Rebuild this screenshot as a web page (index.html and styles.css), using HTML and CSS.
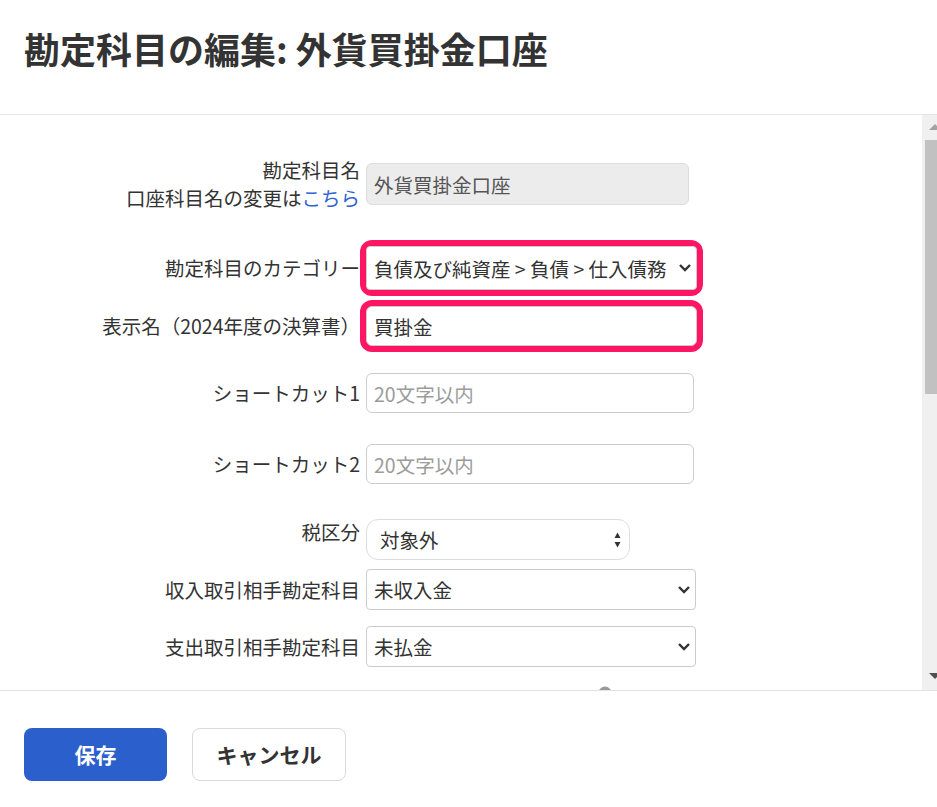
FILE: index.html
```html
<!DOCTYPE html>
<html lang="ja">
<head>
<meta charset="utf-8">
<title>勘定科目の編集</title>
<link rel="stylesheet" href="styles.css">
</head>
<body>
<div class="app">
  <header class="head">
    <h1 class="title">勘定科目の編集: 外貨買掛金口座</h1>
  </header>
  <div class="viewport">
    <main class="body">
      <form class="form">
        <div class="row r1">
          <label class="lbl"><span class="ln">勘定科目名</span><span class="ln">口座科目名の変更は<a class="link" href="#">こちら</a></span></label>
          <input class="input ro w323" value="外貨買掛金口座" disabled>
        </div>
        <div class="row r2">
          <label class="lbl">勘定科目のカテゴリー</label>
          <div class="sel w331 hl">
            <select class="select h44"><option>負債及び純資産 &gt; 負債 &gt; 仕入債務</option></select>
            <svg class="chev" width="14" height="9" viewBox="0 0 14 9"><path d="M2 2l5 5 5-5" fill="none" stroke="#333" stroke-width="2.4"/></svg>
          </div>
        </div>
        <div class="row r3">
          <label class="lbl">表示名（2024年度の決算書）</label>
          <input class="input w331 h40 hl" value="買掛金">
        </div>
        <div class="row r4">
          <label class="lbl">ショートカット1</label>
          <input class="input w328 h40" placeholder="20文字以内">
        </div>
        <div class="row r5">
          <label class="lbl">ショートカット2</label>
          <input class="input w328 h40" placeholder="20文字以内">
        </div>
        <div class="row r6 top">
          <label class="lbl">税区分</label>
          <div class="sel w264">
            <select class="select h41 round"><option>対象外</option></select>
            <svg class="updown" width="7" height="16" viewBox="0 0 7 16"><path d="M3.5 0.5L6.5 6H0.5z M3.5 15.5L6.5 10H0.5z" fill="#333"/></svg>
          </div>
        </div>
        <div class="row r7">
          <label class="lbl">収入取引相手勘定科目</label>
          <div class="sel w330">
            <select class="select h41"><option>未収入金</option></select>
            <svg class="chev" width="14" height="9" viewBox="0 0 14 9"><path d="M2 2l5 5 5-5" fill="none" stroke="#333" stroke-width="2.4"/></svg>
          </div>
        </div>
        <div class="row r8">
          <label class="lbl">支出取引相手勘定科目</label>
          <div class="sel w330">
            <select class="select h41"><option>未払金</option></select>
            <svg class="chev" width="14" height="9" viewBox="0 0 14 9"><path d="M2 2l5 5 5-5" fill="none" stroke="#333" stroke-width="2.4"/></svg>
          </div>
        </div>
        <div class="row r9">
          <span class="lbl"></span>
          <div class="help-wrap">
            <svg class="help" width="14" height="14" viewBox="0 0 14 14"><circle cx="7" cy="7" r="6.5" fill="#9a9a9a"/></svg>
          </div>
        </div>
      </form>
    </main>
    <div class="sb" aria-hidden="true">
      <div class="sb-btn">
        <svg width="15" height="25" viewBox="0 0 15 25"><polygon points="7,15 13,9 19,15" fill="#a3a3a3"/></svg>
      </div>
      <div class="sb-thumb"></div>
      <div class="sb-fill"></div>
      <div class="sb-btn">
        <svg width="15" height="25" viewBox="0 0 15 25"><polygon points="7,8 19,8 13,14" fill="#505050"/></svg>
      </div>
    </div>
  </div>
  <footer class="foot">
    <button class="btn btn-primary" type="button">保存</button>
    <button class="btn btn-default" type="button">キャンセル</button>
  </footer>
</div>
</body>
</html>
```

FILE: styles.css
```css
html, body {
  margin: 0;
  padding: 0;
  background: #fff;
}

body {
  font-family: "Noto Sans CJK JP", "Noto Sans", sans-serif;
  color: #333;
}

.app {
  display: flex;
  flex-direction: column;
  height: 807px;
}

.head {
  padding: 24px 24px 42px;
  border-bottom: 1px solid #e5e5e5;
  flex: none;
}

.title {
  margin: 0;
  font-size: 36px;
  line-height: 48px;
  font-weight: 700;
  color: #333;
}

.viewport {
  position: relative;
  flex: 1;
  min-height: 0;
}

.body {
  height: 100%;
  overflow: hidden;
}

/* decorative scrollbar overlaid on the right edge */
.sb {
  position: absolute;
  top: 0;
  right: 0;
  bottom: 0;
  width: 15px;
  background: #f0f0f0;
  display: flex;
  flex-direction: column;
}

.sb-btn {
  height: 25px;
  flex: none;
}

.sb-btn svg {
  display: block;
}

.sb-thumb {
  flex: none;
  height: 254px;
  margin-left: 3px;
  background: #c1c1c1;
}

.sb-fill {
  flex: 1;
}

.form {
  padding: 41px 0 596px;
  display: flex;
  flex-direction: column;
}

.row {
  display: grid;
  grid-template-columns: 360px max-content;
  column-gap: 6px;
  align-items: center;
}

.row.top {
  align-items: start;
}

.r2 { margin-top: 34px; }
.r3 { margin-top: 16px; }
.r4 { margin-top: 27px; }
.r5 { margin-top: 31px; }
.r6 { margin-top: 35px; }
.r7 { margin-top: 9px; }
.r8 { margin-top: 16px; }
.r9 { margin-top: 19px; }

.lbl {
  text-align: right;
  font-size: 19.5px;
  line-height: 28px;
  color: #333;
  white-space: nowrap;
}

.r6 .lbl {
  margin-top: -1px;
}

.ln {
  display: block;
  height: 28px;
}

.link {
  color: #2d64d2;
  text-decoration: none;
}

.input {
  box-sizing: border-box;
  font-family: "Noto Sans CJK JP", "Noto Sans", sans-serif;
  font-size: 19.5px;
  color: #333;
  border: 1px solid #cccccc;
  border-radius: 6px;
  padding: 0 7px;
  background: #fff;
  margin: 0;
  outline: none;
}

.input::placeholder {
  color: #9b9b9b;
}

.input.ro {
  height: 42px;
  background: #ececec;
  border-color: #dddddd;
  color: #555;
  -webkit-text-fill-color: #555;
  opacity: 1;
}

.w323 { width: 323px; }
.w328 { width: 328px; }
.w330 { width: 330px; }
.w331 { width: 331px; }
.w264 { width: 264px; }

.h40 { height: 40px; }
.h41 { height: 41px; }
.h44 { height: 44px; }

.hl {
  box-shadow: 0 0 0 6px #fe1563;
  border-radius: 6px;
}

.sel {
  position: relative;
  display: block;
}

.select {
  -webkit-appearance: none;
  appearance: none;
  box-sizing: border-box;
  width: 100%;
  margin: 0;
  font-family: "Noto Sans CJK JP", "Noto Sans", sans-serif;
  font-size: 19.5px;
  color: #333;
  background: #fff;
  border: 1px solid #cccccc;
  border-radius: 4px;
  padding: 0 28px 0 7px;
  outline: none;
}

.select.round {
  border-radius: 12px;
  border-color: #dddddd;
  padding-left: 13px;
}

.chev {
  position: absolute;
  top: 50%;
  right: 5px;
  margin-top: -5px;
  pointer-events: none;
}

.updown {
  position: absolute;
  right: 9px;
  top: 13px;
  pointer-events: none;
}

.help-wrap {
  padding-left: 232px;
  height: 26px;
}

.help {
  display: block;
}

.foot {
  flex: none;
  box-sizing: border-box;
  height: 117px;
  border-top: 1px solid #e3e3e3;
  padding: 37px 24px 0;
  display: flex;
  align-items: flex-start;
  gap: 25px;
}

.btn {
  height: 53px;
  border-radius: 8px;
  font-family: "Noto Sans CJK JP", "Noto Sans", sans-serif;
  font-size: 21px;
  font-weight: 700;
  line-height: 1;
  cursor: pointer;
  padding: 0;
}

.btn-primary {
  width: 143px;
  background: #2b5fcc;
  color: #fff;
  border: 0;
}

.btn-default {
  width: 154px;
  background: #fff;
  color: #333;
  border: 1px solid #d9d9d9;
}
```
